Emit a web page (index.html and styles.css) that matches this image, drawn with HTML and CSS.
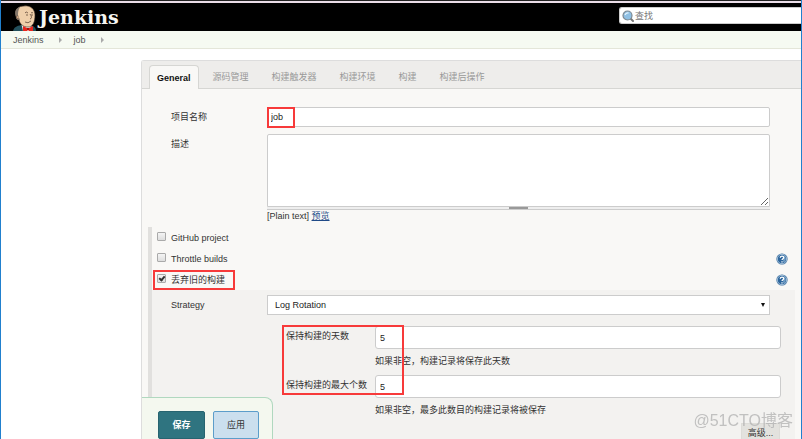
FILE: index.html
```html
<!DOCTYPE html>
<html lang="zh-CN">
<head>
<meta charset="utf-8">
<title>job Config [Jenkins]</title>
<link rel="stylesheet" href="styles.css">
</head>
<body>
<svg class="defs" aria-hidden="true">
  <symbol id="help" viewBox="0 0 12 12">
    <circle cx="6" cy="6" r="5.6" fill="#32689b"/>
    <circle cx="6" cy="6" r="4.7" fill="#2c659c" stroke="#c3d7e8" stroke-width=".8"/>
    <path d="M7.5 2.3a4.200 4.200 0 0 1 1.500 6.200L7 9.500z" fill="#6d9bc3"/>
    <path d="M4.300 4.700C4.300 2.600 7.800 2.700 7.700 4.600C7.600 5.700 6 5.700 6 7.100M6 8.200V9.400" fill="none" stroke="#fff" stroke-width="1.300"/>
  </symbol>
</svg>
<header class="header">
  <a class="brand" href="#">
    <svg class="butler" viewBox="0 0 24 26" aria-hidden="true">
      <path d="M0 26C1 22 4 21 8 20L20 21C22 22 23 24 23 26z" fill="#24505c"/>
      <path d="M8 17L10 26H19L18 19z" fill="#f4f1ec"/>
      <path d="M3 11C1 4 6 1 11 1C18 0 22 5 22 10C22 17 20 22 15 22C10 22 7 19 6 15C4 15 3 13 3 11z" fill="#efcfaa" stroke="#3d2c22" stroke-width=".6"/>
      <path d="M3 12C1 6 3 3 7 2C5 5 5 8 5 10L7 15C4 15 3 14 3 12z" fill="#84786c"/>
      <path d="M5 11C3 10 3 14 6 14" fill="#dfb48e" stroke="#5e4130" stroke-width=".6"/>
      <path d="M12 8Q13 6 15 8M18 8Q19 7 20 8M13 10H15M18 10H20M17 9Q20 13 17 14M12 17Q15 19 18 16" fill="none" stroke="#4d372a" stroke-width=".7"/>
      <path d="M10 21L14 23H16L20 21V26H16L15 25L14 26H10z" fill="#e8251d"/>
      <path d="M14 23H16V25H14z" fill="#a5120d"/>
    </svg>
    <span class="wordmark">Jenkins</span>
  </a>
  <label class="search">
    <svg class="lens" viewBox="0 0 12 12" aria-hidden="true">
      <path d="M8.500 8.500L11 11" stroke="#777" stroke-width="2" stroke-linecap="round"/>
      <circle cx="5.500" cy="5.500" r="4.500" fill="#8fc0e4" stroke="#7d8890" stroke-width="1.200"/>
      <path d="M3 5Q4 2.500 6.500 3" fill="none" stroke="#e3f3fd" stroke-width="1.300"/>
    </svg>
    <input type="text" placeholder="查找" aria-label="查找">
  </label>
</header>
<nav class="crumbs">
  <a href="#">Jenkins</a><i></i><a href="#">job</a><i></i>
</nav>
<main class="panel">
  <div class="tabs" role="tablist">
    <button class="tab active" role="tab" aria-selected="true">General</button>
    <button class="tab" role="tab">源码管理</button>
    <button class="tab" role="tab">构建触发器</button>
    <button class="tab" role="tab">构建环境</button>
    <button class="tab" role="tab">构建</button>
    <button class="tab" role="tab">构建后操作</button>
  </div>
  <form class="form">
    <div class="row">
      <label for="name">项目名称</label>
      <div class="field marked mark-name"><input class="box" id="name" type="text" value="job"></div>
    </div>
    <div class="row">
      <label for="desc">描述</label>
      <div class="field">
        <textarea class="box" id="desc"></textarea>
        <div class="grip"></div>
        <div class="format">[Plain text] <a href="#">预览</a></div>
      </div>
    </div>
    <div class="options">
      <div class="option"><label><input type="checkbox">GitHub project</label></div>
      <div class="option"><label><input type="checkbox">Throttle builds</label><a class="help" href="#" aria-label="帮助"><svg><use href="#help"/></svg></a></div>
      <div class="option"><label class="marked mark-option"><input type="checkbox" checked>丢弃旧的构建</label><a class="help" href="#" aria-label="帮助"><svg><use href="#help"/></svg></a></div>
      <div class="nested">
        <div class="strategy">
          <label for="strategy">Strategy</label>
          <select class="box" id="strategy"><option>Log Rotation</option></select>
        </div>
        <div class="rotation marked mark-rotation">
          <label for="days">保持构建的天数</label>
          <input class="box" id="days" type="text" value="5">
          <p>如果非空，构建记录将保存此天数</p>
          <label for="count">保持构建的最大个数</label>
          <input class="box" id="count" type="text" value="5">
          <p>如果非空，最多此数目的构建记录将被保存</p>
        </div>
        <button class="advanced" type="button">高级...</button>
      </div>
    </div>
  </form>
</main>
<div class="actions">
  <button class="save" type="button">保存</button>
  <button class="apply" type="button">应用</button>
</div>
<div class="watermark">@51CTO博客</div>
</body>
</html>
```
FILE: styles.css
```css
*, *::before, *::after { box-sizing: border-box; }
body, button, input, select, textarea {
  font: 9px/12px "Liberation Sans", "Noto Sans CJK SC", sans-serif;
  color: #333;
}
body {
  margin: 0;
  height: 100vh;
  display: flex;
  flex-direction: column;
  overflow: hidden;
  background: #fff;
  border: solid #2180ce;
  border-width: 0 1px;
}
.defs { position: absolute; width: 0; height: 0; }
p { margin: 0; }

.header {
  flex: none;
  height: 31px;
  padding: 3px 0 0 12px;
  display: flex;
  justify-content: space-between;
  align-items: flex-start;
  background: linear-gradient(#222 1px, #eadde8 1px, #eadde8 3px, #000 3px);
}
.brand { display: flex; height: 28px; overflow: hidden; text-decoration: none; padding-top: 2px; }
.butler { width: 24px; height: 26px; }
.wordmark {
  margin-left: 2px;
  font: bold 19px/24px "DejaVu Serif", serif;
  color: #f6f6f2;
}
.search {
  display: flex;
  align-items: center;
  gap: 1px;
  width: 182px;
  height: 17px;
  margin-top: 4px;
  padding-left: 2px;
  background: #fff;
  border: 1px solid #ccc;
  border-right: 0;
  border-radius: 3px 0 0 3px;
}
.lens { width: 12px; height: 12px; flex: none; }
.search input { width: 100%; border: 0; padding: 0; background: none; outline: 0; }
.search input::placeholder { color: #777; }

.crumbs {
  flex: none;
  height: 18px;
  padding-left: 12px;
  display: flex;
  align-items: center;
  background: #f6faf2;
  border-bottom: 1px solid #e4e6d9;
}
.crumbs a { color: #555; text-decoration: none; }
.crumbs i {
  margin: 0 12px 0 15px;
  border: solid transparent;
  border-width: 3px 0 3px 3px;
  border-left-color: #aaa;
}

.panel {
  flex: none;
  margin: 11px 0 0 140px;
  background: #f9f8f6;
  border: solid #ddd;
  border-width: 1px 0 0 1px;
  border-radius: 3px 0 0 0;
}
.tabs {
  height: 28px;
  padding: 4px 0 0 7px;
  display: flex;
  gap: 1px;
  background: #eeedeb;
  border-bottom: 1px solid #d6d6d3;
}
.tab {
  height: 24px;
  padding: 0 11px;
  border: 0;
  background: none;
  color: #999;
}
.tab.active {
  margin-right: 2px;
  padding: 0 7px;
  font-weight: bold;
  color: #111;
  background: #f9f8f6;
  border: 1px solid #d6d6d3;
  border-bottom: 0;
  border-radius: 4px 4px 0 0;
}

.form { padding: 18px 0 0 6px; }
.box {
  display: block;
  width: 100%;
  padding: 0 4px;
  background: #fff;
  border: 1px solid #ccc;
  border-radius: 2px;
  color: #222;
  outline: 0;
}
.row, .strategy {
  display: grid;
  grid-template-columns: 96px 1fr;
  align-items: start;
}
.row { padding: 0 31px 7px 23px; }
.row label { padding-top: 4px; }
.field input { height: 20px; padding: 0 3px; }
textarea.box { height: 73px; border-radius: 2px 2px 0 0; resize: vertical; }
.grip {
  height: 3px;
  background: linear-gradient(#999, #999) center / 19px 3px no-repeat #eee;
  border-bottom: 1px solid #ccc;
}
.format a { color: #204a87; }

.marked { position: relative; }
.marked::after {
  content: "";
  position: absolute;
  border: 2px solid #f73a3a;
  pointer-events: none;
}
.mark-name::after { left: 0; top: 0; width: 28px; height: 21px; }
.mark-option::after { left: -4px; top: 1px; width: 82px; height: 20px; }
.mark-rotation::after { left: -4px; top: -1px; width: 122px; height: 70px; }

.options {
  margin-right: 6px;
  border-left: 4px solid #e1e0de;
}
.row + .options { margin-top: -2px; }
.option {
  height: 21px;
  padding: 0 7px 0 5px;
  display: flex;
  justify-content: space-between;
  align-items: center;
}
.option label { display: flex; align-items: center; gap: 5px; height: 21px; }
.option input {
  appearance: none;
  position: relative;
  width: 9px;
  height: 9px;
  margin: 0 0 3px;
  background: linear-gradient(#f4f4f4, #dedede);
  border: 1px solid #aaa;
  border-radius: 1px;
}
.option input:checked::after {
  content: "";
  position: absolute;
  left: 2px;
  top: 0;
  width: 4px;
  height: 6px;
  border: solid #333;
  border-width: 0 2px 2px 0;
  transform: rotate(40deg);
}
.help, .help svg { display: block; width: 12px; height: 12px; }

.nested { background: #f3f2f0; padding: 5px 14px 0 19px; }
.strategy { position: relative; padding-right: 11px; }
.strategy label { padding-top: 4px; }
.strategy select {
  height: 20px;
  padding: 0 7px;
  appearance: none;
  border-radius: 0;
}
.strategy::after {
  content: "";
  position: absolute;
  right: 16px;
  top: 8px;
  border: solid transparent;
  border-width: 4px 2px 0;
  border-top-color: #111;
  pointer-events: none;
}
.rotation {
  display: grid;
  grid-template-columns: 89px 1fr;
  margin: 11px 0 0 115px;
}
.rotation label { padding-top: 4px; }
.rotation input { height: 23px; border-radius: 3px; }
.rotation p { grid-column: 2; padding: 6px 0 8px; }
.advanced {
  display: block;
  height: 20px;
  width: 39px;
  margin: -1px 1px 0 auto;
  padding: 0;
  border: 1px solid #dddcd8;
  background: #e3e2de;
}

.actions {
  position: fixed;
  left: 142px;
  bottom: 0;
  display: flex;
  gap: 8px;
  padding: 13px 13px 0 16px;
  background: #f4f8ef;
  border: 1px solid #b0d8bf;
  border-width: 1px 1px 0 0;
  border-radius: 0 8px 0 0;
}
.actions button { width: 47px; height: 28px; border-radius: 2px; padding: 0; }
.actions .save { background: #2f7480; border: 1px solid #276470; color: #fff; font-weight: bold; }
.actions .apply { width: 46px; background: #cbdfee; border: 1px solid #5c9dca; }
.watermark {
  position: fixed;
  right: 9px;
  bottom: 6px;
  font-size: 16px;
  line-height: 24px;
  color: #b4b4b4;
  opacity: .8;
}
```
